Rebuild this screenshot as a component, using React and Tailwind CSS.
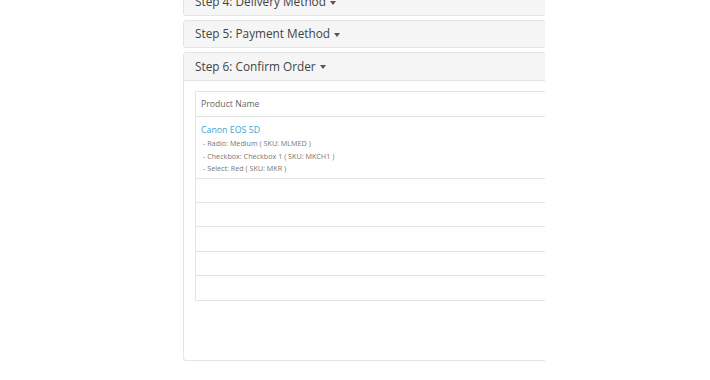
export default function App() {
  const steps = [
    { title: 'Step 4: Delivery Method', first: true },
    { title: 'Step 5: Payment Method' },
  ];
  const options = [
    'Radio: Medium ( SKU: MLMED )',
    'Checkbox: Checkbox 1 ( SKU: MKCH1 )',
    'Select: Red ( SKU: MKR )',
  ];

  return (
    <div className="w-[710px] h-[380px] bg-white overflow-hidden font-['Open_Sans',sans-serif]">
      <div className="ml-[183px] w-[362px] overflow-hidden">
        <div className="w-[520px]">
          {steps.map((s) => (
            <div
              key={s.title}
              className={`mb-[4px] h-[28px] rounded-[3px] border border-[#e4e4e4] bg-[#f5f5f5] pl-[11px] flex items-center text-[11.8px] text-[#444] ${s.first ? '-mt-[12px]' : ''}`}
            >
              {s.title}
              <span className="ml-[4px] mt-[1px] inline-block w-0 h-0 border-t-[4px] border-t-[#555] border-x-[3.5px] border-x-transparent" />
            </div>
          ))}

          <div className="rounded-[3px] border border-[#e4e4e4]">
            <div className="h-[28px] bg-[#f5f5f5] border-b border-[#e4e4e4] pl-[11px] flex items-center text-[11.8px] text-[#444]">
              Step 6: Confirm Order
              <span className="ml-[4px] mt-[1px] inline-block w-0 h-0 border-t-[4px] border-t-[#555] border-x-[3.5px] border-x-transparent" />
            </div>
            <div className="h-[279px] pt-[10px] pl-[11px]">
              <div className="border border-[#e4e4e4]">
                <div className="h-[25px] border-b border-[#e4e4e4] pl-[5px] pt-[2px] flex items-center text-[8.7px] text-[#666]">
                  Product Name
                </div>
                <div className="h-[62px] border-b border-[#e4e4e4] pl-[5px] pt-[7px]">
                  <div className="text-[8.8px] leading-[13px] text-[#3aa6d0]">Canon EOS 5D</div>
                  {options.map((o) => (
                    <div key={o} className="pl-[2px] text-[7.2px] leading-[12.5px] text-[#777]">
                      - {o}
                    </div>
                  ))}
                </div>
                {[0, 1, 2, 3, 4].map((i) => (
                  <div
                    key={i}
                    className={`h-[24.2px] ${i < 4 ? 'border-b border-[#e4e4e4]' : ''}`}
                  />
                ))}
              </div>
            </div>
          </div>
        </div>
      </div>
    </div>
  );
}
